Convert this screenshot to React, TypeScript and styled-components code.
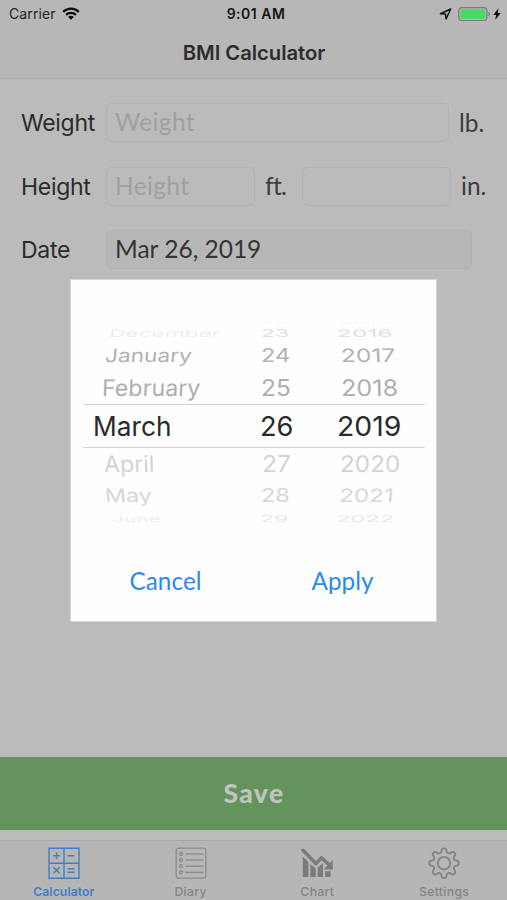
import React from "react";
import styled, { createGlobalStyle, css } from "styled-components";

const sans = `"Inter", "Liberation Sans", sans-serif`;
const humanist = `"Lato", "Open Sans", sans-serif`;

const GlobalStyle = createGlobalStyle`
  *, *::before, *::after { box-sizing: border-box; }
  body { margin: 0; background: #bbbbbb; font-family: ${sans}; }
  button { border: 0; background: none; padding: 0; margin: 0; }
`;

const Screen = styled.div`
  position: relative;
  width: 507px;
  height: 900px;
  display: flex;
  flex-direction: column;
  overflow: hidden;
  background: #bbbbbb;
  color: #292929;
`;

const Header = styled.header`
  height: 79px;
  flex: none;
  background: #b7b7b7;
  border-bottom: 1px solid #a9a9a9;
`;

const StatusBar = styled.div`
  height: 27px;
  display: grid;
  grid-template-columns: 1fr auto 1fr;
  align-items: center;
  padding: 0 6px 0 9px;
  font-size: 14px;
  line-height: 27px;
  color: #222;
`;

const Carrier = styled.div`
  display: flex;
  align-items: center;
  gap: 6px;
  letter-spacing: 0.1px;
`;

const Clock = styled.div`
  font-weight: 600;
  letter-spacing: 0.5px;
  padding-left: 2px;
  color: #151515;
`;

const StatusIcons = styled.div`
  display: flex;
  justify-content: flex-end;
  align-items: center;
`;

const Gap = styled.i<{ $w: number }>`
  width: ${(p) => p.$w}px;
`;

const Title = styled.h1`
  margin: 0;
  height: 51px;
  line-height: 51px;
  padding-left: 1px;
  text-align: center;
  font-size: 20.3px;
  font-weight: 600;
  letter-spacing: -0.05px;
  color: #2c2c2c;
`;

const Form = styled.main`
  flex: 1;
  display: flex;
  flex-direction: column;
  gap: 24.6px;
  padding: 24.3px 0 0 21px;
`;

const FormRow = styled.div`
  height: 39px;
  display: flex;
  align-items: center;
`;

const Label = styled.label`
  width: 85px;
  padding-top: 2px;
  font-size: 23px;
  letter-spacing: -0.3px;
  line-height: 39px;
  color: #2b2b2b;
`;

const Field = styled.div<{ $width: number; $filled?: boolean }>`
  width: ${(p) => p.$width}px;
  height: 39px;
  padding: 0 8px 1px;
  border: 1px solid #b1b1b1;
  border-radius: 6px;
  background: ${(p) => (p.$filled ? "#b7b7b7" : "#bbbbbb")};
  font: 400 24.5px/36px ${humanist};
  letter-spacing: ${(p) => (p.$filled ? "0px" : "0.35px")};
  color: ${(p) => (p.$filled ? "#343434" : "#a0a0a0")};
`;

const Unit = styled.span<{ $wide?: boolean }>`
  width: ${(p) => (p.$wide ? 47 : 42)}px;
  padding: 0 0 1px 10px;
  font: 400 24.5px/37px ${humanist};
  letter-spacing: ${(p) => (p.$wide ? "-0.7px" : "0px")};
  color: #3c3c3c;
`;

const SaveButton = styled.button`
  height: 73px;
  flex: none;
  background: #65935d;
  color: #c0c5bf;
  font: 900 26.5px/71px ${humanist};
  letter-spacing: 1.4px;
  padding-left: 1px;
`;

const TabBar = styled.nav`
  height: 60px;
  flex: none;
  margin-top: 10px;
  display: grid;
  grid-template-columns: repeat(4, 1fr);
  border-top: 1px solid #a7a7a7;
  background: #b6b6b6;
`;

const Tab = styled.button<{ $active?: boolean }>`
  display: flex;
  flex-direction: column;
  align-items: center;
  padding: 6px 0 0 1px;
  font: ${(p) => (p.$active ? 600 : 500)} 12.2px/16px ${sans};
  letter-spacing: ${(p) => (p.$active ? "0.1px" : "0.35px")};
  color: ${(p) => (p.$active ? "#3d80c8" : "#848484")};
  svg { display: block; margin-bottom: 5px; }
`;

const Overlay = styled.div`
  position: absolute;
  inset: 0;
  display: flex;
  justify-content: center;
  align-items: flex-start;
  padding-top: 279px;
`;

const Dialog = styled.section`
  width: 367px;
  height: 343px;
  display: flex;
  flex-direction: column;
  padding: 40px 11px 0 12px;
  border: 1px solid #d6d6d6;
  background: #fefefe;
`;

const Wheels = styled.div`
  position: relative;
  height: 207px;
  display: grid;
  grid-template-columns: 167px 75px 101px;
  overflow: hidden;
`;

const SelectionBand = styled.div`
  position: absolute;
  left: 0;
  right: 0;
  top: 84px;
  height: 44px;
  border: solid #d2d2d2;
  border-width: 1px 0;
`;

const Wheel = styled.div`
  display: flex;
  flex-direction: column;
`;

const levels = [
  { height: 6, sy: 0.13, color: "#f6f6f6", size: 24, skew: 0 },
  { height: 16, sy: 0.43, color: "#dfdfdf", size: 24, skew: 4 },
  { height: 28, sy: 0.77, color: "#b2b2b2", size: 24, skew: 4 },
  { height: 36, sy: 0.95, color: "#aeaeae", size: 24, skew: 2 },
  { height: 40, sy: 1, color: "#2a2a2a", size: 27.5, skew: 0 },
  { height: 36, sy: 0.95, color: "#d3d3d3", size: 24, skew: -2 },
  { height: 28, sy: 0.77, color: "#d7d7d7", size: 24, skew: -4 },
  { height: 17, sy: 0.38, color: "#e8e8e8", size: 24, skew: -4 },
];

const WheelRow = styled.div<{ $level: number; $x: number; $sx: number; $lean: number; $tone?: string }>`
  ${({ $level, $x, $sx, $lean, $tone }) => {
    const l = levels[$level];
    return css`
      height: ${l.height}px;
      padding-left: ${$x}px;
      color: ${$tone ?? l.color};
      font-size: ${l.size}px;
      line-height: ${l.height}px;
      white-space: nowrap;
      span {
        display: inline-block;
        transform: scale(${$sx}, ${l.sy}) skewX(${-l.skew * $lean}deg);
        transform-origin: 0 50%;
      }
    `;
  }}
`;

const Actions = styled.div`
  height: 43px;
  margin-top: 32px;
  display: grid;
  grid-template-columns: 165px 1fr;
`;

const Action = styled.button<{ $shift?: number }>`
  font: 400 24.3px/43px ${humanist};
  letter-spacing: ${(p) => (p.$shift ? "0px" : "0.05px")};
  color: #2b89ef;
  padding-left: ${(p) => p.$shift ?? 0}px;
`;

type Item = { text: string; x: number; sx: number; tone?: string };

const months: Item[] = [
  { text: "", x: 0, sx: 1 },
  { text: "December", x: 25.5, sx: 0.945, tone: "#ededed" },
  { text: "January", x: 22, sx: 0.945 },
  { text: "February", x: 18.5, sx: 0.97 },
  { text: "March", x: 9.5, sx: 0.955 },
  { text: "April", x: 20.5, sx: 0.965 },
  { text: "May", x: 22, sx: 0.97 },
  { text: "June", x: 29, sx: 0.86, tone: "#ededed" },
];

const days: Item[] = [
  { text: "22", x: 11, sx: 0.92 },
  { text: "23", x: 10.5, sx: 0.95 },
  { text: "24", x: 10.5, sx: 0.98 },
  { text: "25", x: 10.5, sx: 1.02 },
  { text: "26", x: 10, sx: 0.99 },
  { text: "27", x: 11.5, sx: 1.02 },
  { text: "28", x: 10.5, sx: 0.98 },
  { text: "29", x: 10, sx: 0.96 },
];

const years: Item[] = [
  { text: "2015", x: 14, sx: 0.95 },
  { text: "2016", x: 12, sx: 1.02 },
  { text: "2017", x: 15.5, sx: 1.02 },
  { text: "2018", x: 15.5, sx: 1.05 },
  { text: "2019", x: 11.5, sx: 1.03 },
  { text: "2020", x: 14.5, sx: 1.01 },
  { text: "2021", x: 14, sx: 1.01 },
  { text: "2022", x: 10.5, sx: 0.98 },
];

function PickerWheel({ items, lean }: { items: Item[]; lean: number }) {
  return (
    <Wheel>
      {items.map((item, i) => (
        <WheelRow key={i} $level={i} $x={item.x} $sx={item.sx} $lean={lean} $tone={item.tone}>
          <span>{item.text}</span>
        </WheelRow>
      ))}
    </Wheel>
  );
}

const WifiIcon = () => (
  <svg width="18" height="13" viewBox="0 0 18 13" fill="none" stroke="#0c0c0c">
    <path d="M1.2 4.8a11.2 11.2 0 0 1 15.6 0" strokeWidth="2.4" />
    <path d="M4 7.9a7.2 7.2 0 0 1 10 0" strokeWidth="2.2" />
    <path d="M9 12.8 6.1 9.9a4 4 0 0 1 5.8 0Z" fill="#0c0c0c" stroke="none" />
  </svg>
);

const LocationIcon = () => (
  <svg width="13" height="12" viewBox="0 0 13 12" fill="none" stroke="#161616" strokeWidth="1.5" strokeLinejoin="round">
    <path d="M11.7 1 1.4 5.7l5 .4.7 4.8Z" />
  </svg>
);

const BatteryIcon = () => (
  <svg width="33" height="14" viewBox="0 0 33 14">
    <rect x=".7" y=".7" width="28.2" height="12.8" rx="3.2" fill="none" stroke="#7b7b7b" strokeWidth="1.2" />
    <rect x="2.3" y="2.3" width="25" height="9.6" rx="1.6" fill="#4bd964" />
    <path d="M30.4 4.8q1.7.6 1.7 2.2t-1.7 2.2Z" fill="#808080" />
  </svg>
);

const BoltIcon = () => (
  <svg width="8" height="12" viewBox="0 0 8 12">
    <path d="M5.5.2.3 6.9h2.8L2.3 11.8 7.8 4.9H4.8Z" fill="#0d0d0d" />
  </svg>
);

const CalculatorIcon = () => (
  <svg width="32" height="32" viewBox="0 0 32 32" fill="none" stroke="#3d80c8" strokeWidth="1.4">
    <path d="M1 1.2h30v30H1ZM16 1v30M1 16.2h30" />
    <path d="M5 8.7h7M8.5 5.2v7M19.5 8.7h7M5.6 20.3l6 6M11.6 20.3l-6 6M19.5 21.7h7M19.5 25.3h7" />
  </svg>
);

const DiaryIcon = () => (
  <svg width="32" height="32" viewBox="0 0 32 32" fill="none" stroke="#8b8b8b" strokeWidth="1.3">
    <rect x="1.2" y="1.2" width="29.6" height="30" rx="2.4" />
    {[7, 13, 19.2, 25.4].map((y) => (
      <g key={y}>
        <circle cx="6" cy={y} r="1.5" />
        <path d={`M10.5 ${y}h18`} />
      </g>
    ))}
  </svg>
);

const ChartIcon = () => (
  <svg width="32" height="32" viewBox="0 0 32 32" fill="#7b7b7b">
    <path d="M1.8 9.3 7.4 14.9V30H1.8ZM9.4 17l5.3 4.6V30H9.4ZM16.7 20.6l5.2-4.4V30h-5.2ZM24.2 24.2h5.4V30h-5.4Z" />
    <path d="m1.9 3.2 13 13.3 5.6-5.6 6.6 5.8" fill="none" stroke="#7b7b7b" strokeWidth="3.4" strokeLinecap="round" />
    <path d="M31.8 13v9.4h-9.4Z" />
  </svg>
);

const gearPath =
  Array.from({ length: 161 }, (_, i) => {
    const angle = (i / 160) * Math.PI * 2;
    const wave = Math.tanh(1.8 * Math.cos(8 * angle)) / Math.tanh(1.8);
    const radius = 12.8 + 2 * wave;
    return `${i ? "L" : "M"}${(16 + radius * Math.sin(angle)).toFixed(2)} ${(16.2 - radius * Math.cos(angle)).toFixed(2)}`;
  }).join("") + "Z";

const SettingsIcon = () => (
  <svg width="32" height="32" viewBox="0 0 32 32" fill="none" stroke="#838383" strokeWidth="1.8" strokeLinejoin="round">
    <path d={gearPath} />
    <circle cx="16" cy="16.2" r="6.3" />
  </svg>
);

export default function App() {
  return (
    <>
      <GlobalStyle />
      <Screen>
        <Header>
          <StatusBar>
            <Carrier>
              Carrier
              <WifiIcon />
            </Carrier>
            <Clock>9:01 AM</Clock>
            <StatusIcons>
              <LocationIcon />
              <Gap $w={6} />
              <BatteryIcon />
              <Gap $w={2} />
              <BoltIcon />
            </StatusIcons>
          </StatusBar>
          <Title>BMI Calculator</Title>
        </Header>

        <Form>
          <FormRow>
            <Label>Weight</Label>
            <Field $width={343}>Weight</Field>
            <Unit>lb.</Unit>
          </FormRow>
          <FormRow>
            <Label>Height</Label>
            <Field $width={149}>Height</Field>
            <Unit $wide>ft.</Unit>
            <Field $width={149} />
            <Unit>in.</Unit>
          </FormRow>
          <FormRow>
            <Label>Date</Label>
            <Field $width={366} $filled>
              Mar 26, 2019
            </Field>
          </FormRow>
        </Form>

        <SaveButton>Save</SaveButton>

        <TabBar>
          <Tab $active>
            <CalculatorIcon />
            Calculator
          </Tab>
          <Tab>
            <DiaryIcon />
            Diary
          </Tab>
          <Tab>
            <ChartIcon />
            Chart
          </Tab>
          <Tab>
            <SettingsIcon />
            Settings
          </Tab>
        </TabBar>

        <Overlay>
          <Dialog>
            <Wheels>
              <PickerWheel items={months} lean={1} />
              <PickerWheel items={days} lean={0} />
              <PickerWheel items={years} lean={-0.6} />
              <SelectionBand />
            </Wheels>
            <Actions>
              <Action>Cancel</Action>
              <Action $shift={12}>Apply</Action>
            </Actions>
          </Dialog>
        </Overlay>
      </Screen>
    </>
  );
}
